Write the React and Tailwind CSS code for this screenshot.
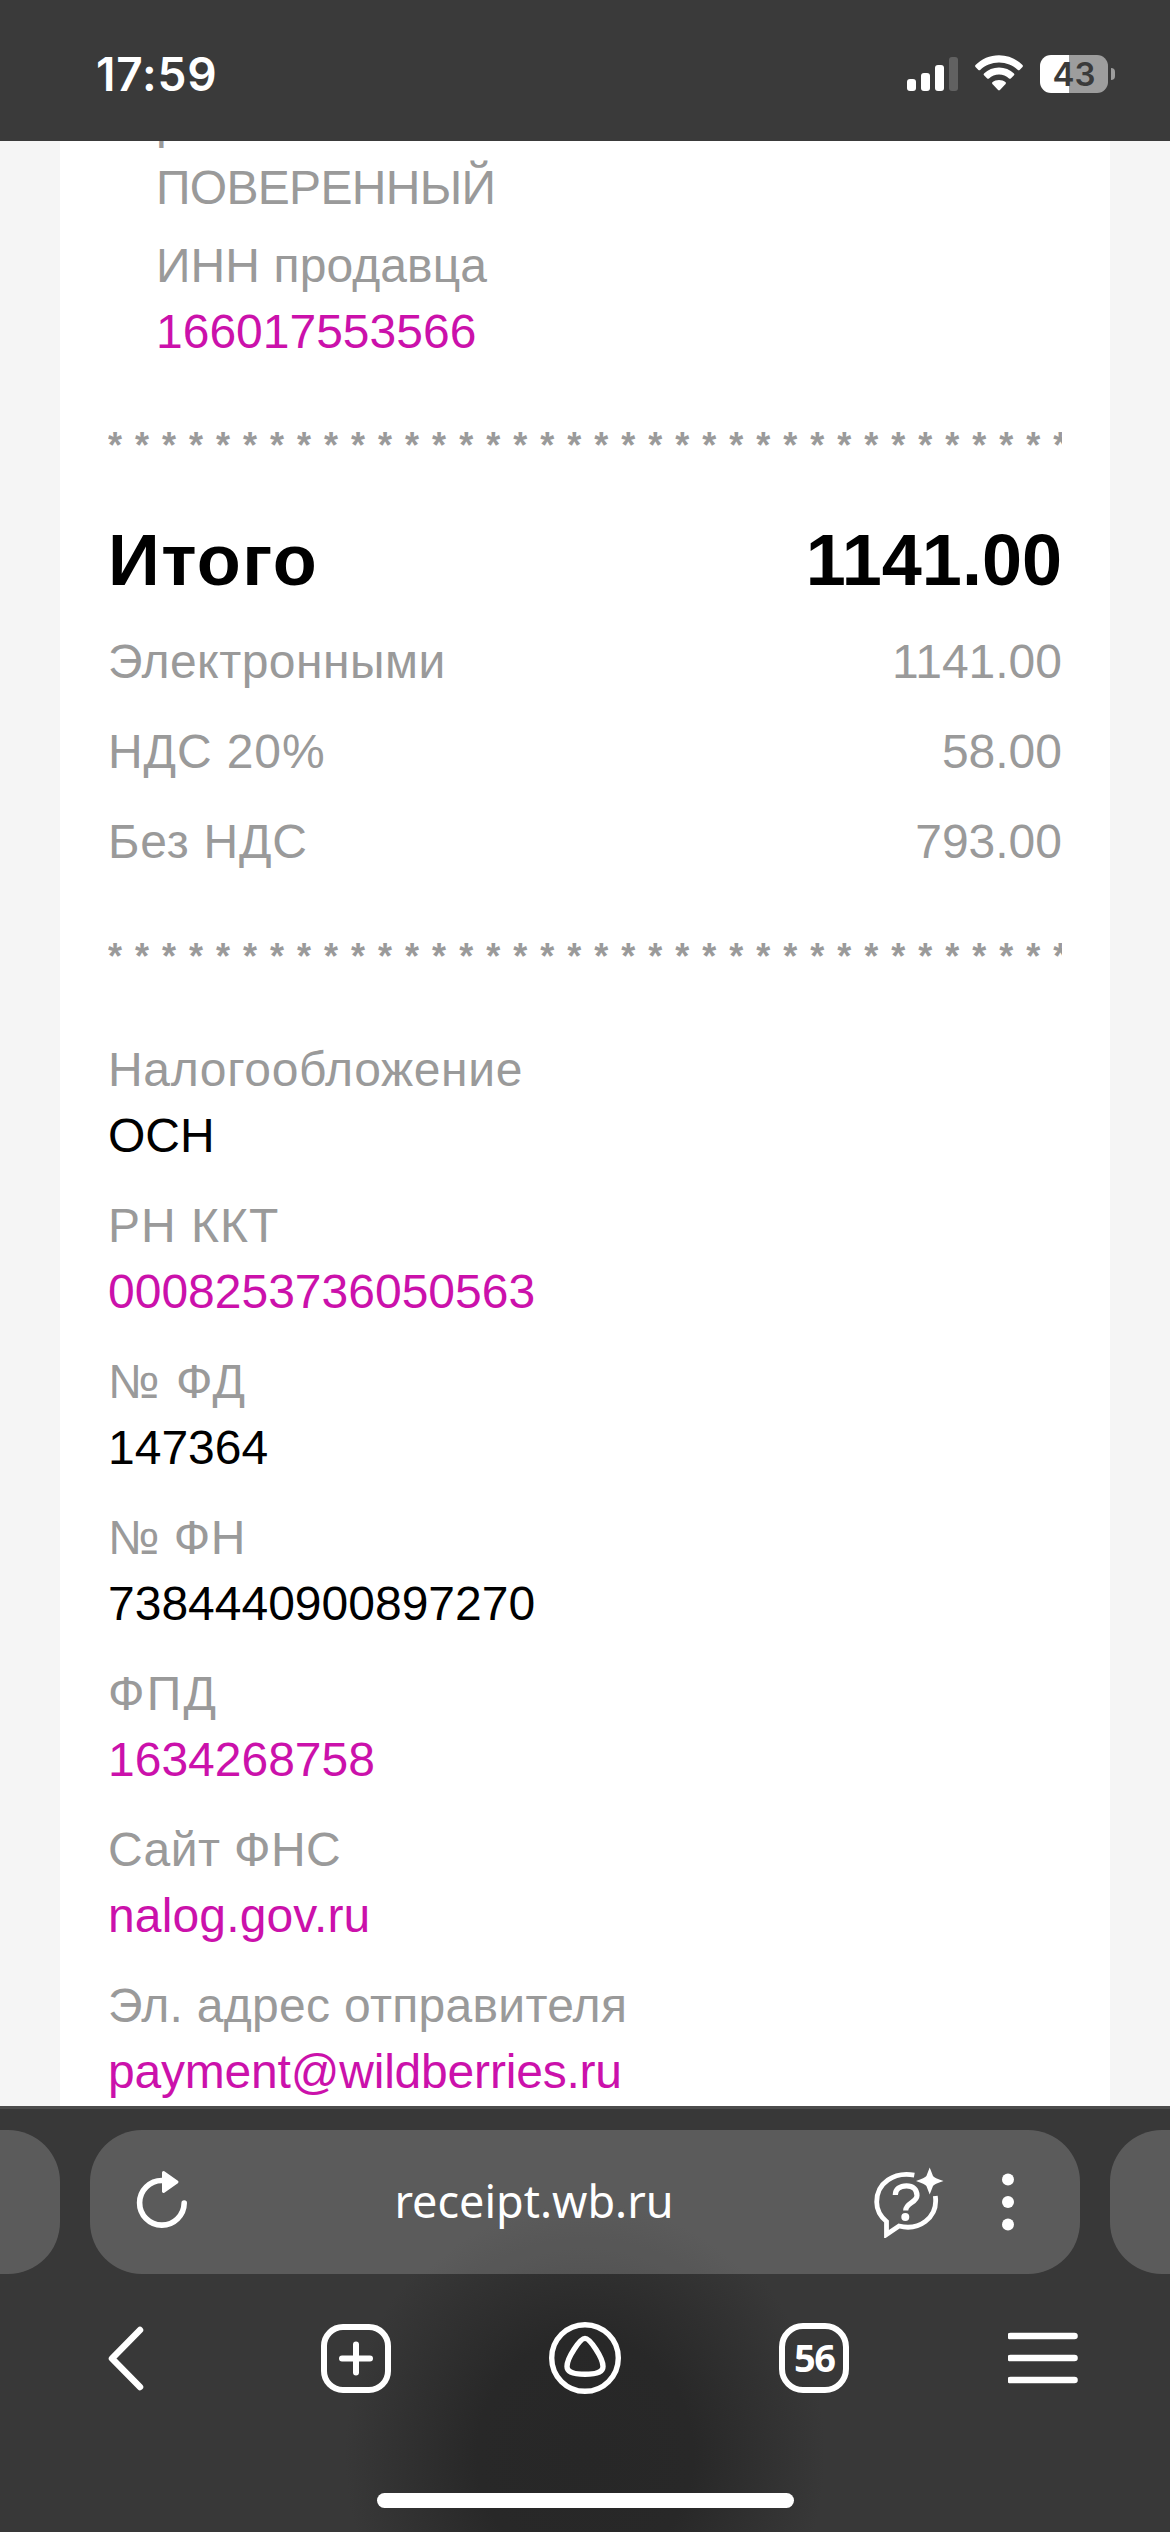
import React from 'react';

const details = [
  { label: 'Налогообложение', value: 'ОСН', spacing: 'tracking-[0.65px]' },
  { label: 'РН ККТ', value: '0008253736050563', link: true, spacing: 'tracking-[1px]' },
  { label: '№ ФД', value: '147364', spacing: 'tracking-[1.6px]' },
  { label: '№ ФН', value: '7384440900897270', spacing: 'tracking-[0.5px]' },
  { label: 'ФПД', value: '1634268758', link: true, spacing: 'tracking-[2.2px]' },
  { label: 'Сайт ФНС', value: 'nalog.gov.ru', link: true, spacing: 'tracking-[0.4px]', valueSpacing: 'tracking-[0.15px]' },
  { label: 'Эл. адрес отправителя', value: 'payment@wildberries.ru', link: true, spacing: 'tracking-[0.3px]', valueSpacing: 'tracking-[-0.2px]' },
];

const totals = [
  { label: 'Электронными', value: '1141.00', spacing: 'tracking-[0.5px]' },
  { label: 'НДС 20%', value: '58.00', spacing: 'tracking-[0.9px]' },
  { label: 'Без НДС', value: '793.00', spacing: 'tracking-[0.75px]' },
];

const StatusBar = () => (
  <header className="flex h-[141px] shrink-0 items-start justify-between bg-[#3a3a3a] pl-[96px] pr-[55px] text-white">
    <span className="mt-[46px] font-['Inter',sans-serif] text-[46px] font-semibold leading-[56px] tracking-[0.8px]">17:59</span>
    <div className="mt-[55px] flex h-[38px]">
      <svg className="mt-[2px] h-[34px] w-[51px]" viewBox="0 0 51 34" fill="currentColor">
        <rect x="0" y="22" width="9" height="12" rx="3" />
        <rect x="14" y="16" width="9" height="18" rx="3" />
        <rect x="28" y="8" width="9" height="26" rx="3" />
        <rect x="42" y="0" width="9" height="34" rx="3" opacity="0.2" />
      </svg>
      <svg className="ml-[17px] h-[36px] w-[48px]" viewBox="0 0 48 36" fill="currentColor">
        <path d="M24 0.3C33.2 0.3 41.5 4 47.5 10.1Q48.3 11 47.5 11.9L44.6 14.9Q43.7 15.7 42.8 14.9C37.9 10.2 31.2 7.4 24 7.4S10.1 10.2 5.2 14.9Q4.3 15.7 3.4 14.9L0.5 11.9Q-0.3 11 0.5 10.1C6.5 4 14.8 0.3 24 0.3Z" />
        <path d="M24 12.6C29.8 12.6 35 14.8 39 18.4Q39.9 19.3 39 20.2L35.8 23.4Q34.9 24.2 34 23.4C31.3 21 27.8 19.6 24 19.6S16.7 21 14 23.4Q13.1 24.2 12.2 23.4L9 20.2Q8.1 19.3 9 18.4C13 14.8 18.2 12.6 24 12.6Z" />
        <path d="M24 25C26.5 25 28.8 25.9 30.6 27.3Q31.4 28 30.6 28.9L24.9 35.1Q24 36 23.1 35.1L17.4 28.9Q16.6 28 17.4 27.3C19.2 25.9 21.5 25 24 25Z" />
      </svg>
      <div className="ml-[17px] flex h-[38px] w-[68px] items-center justify-center rounded-[11px] bg-linear-to-r from-white from-[43%] to-[#9d9d9d] to-[43%] font-['Inter',sans-serif] text-[33px] font-semibold leading-[38px] text-[#3a3a3a]">
        43
      </div>
      <div className="ml-[3px] mt-[13px] h-[12px] w-[4px] rounded-r-full bg-[#9d9d9d]" />
    </div>
  </header>
);

const Stars = () => (
  <div className="h-[36px] overflow-hidden whitespace-nowrap text-[36px] font-bold leading-[36px] tracking-[13px] text-[#9a9a9a]">
    {'*'.repeat(36)}
  </div>
);

const Receipt = () => (
  <main className="flex h-[1965px] shrink-0 flex-col overflow-hidden bg-[#f5f5f5] px-[60px]">
    <div className="h-[1965px] bg-white px-[48px] font-['Liberation_Sans',Arial,sans-serif] text-[48px] leading-[66px] text-[#9a9a9a]">
      <div className="-mt-[52px] pl-[48px]">
        <p>р</p>
        <p className="tracking-[-0.7px]">ПОВЕРЕННЫЙ</p>
        <p className="mt-[12px] tracking-[0.1px]">ИНН продавца</p>
        <p className="text-[#cb11ab]">166017553566</p>
      </div>
      <div className="mt-[63px]">
        <Stars />
      </div>
      <div className="mt-[51px] flex h-[90px] items-center justify-between text-[72px] font-bold leading-[90px] text-black">
        <span className="tracking-[1.4px]">Итого</span>
        <span>1141.00</span>
      </div>
      <div className="mt-[12px]">
        {totals.map((row) => (
          <div key={row.label} className="flex h-[90px] items-center justify-between">
            <span className={row.spacing}>{row.label}</span>
            <span>{row.value}</span>
          </div>
        ))}
      </div>
      <div className="mt-[52px]">
        <Stars />
      </div>
      <dl className="mt-[62px]">
        {details.map((item) => (
          <div key={item.label} className="mb-[24px]">
            <dt className={item.spacing}>{item.label}</dt>
            <dd className={`${item.link ? 'text-[#cb11ab]' : 'text-black'} ${item.valueSpacing || ''}`}>{item.value}</dd>
          </div>
        ))}
      </dl>
    </div>
  </main>
);

const AddressBar = () => (
  <div className="flex h-[144px] justify-between">
    <div className="w-[60px] rounded-r-[52px] bg-white/18" />
    <div className="flex w-[990px] items-center rounded-[52px] bg-white/18 pl-[44px] pr-[65px] text-white">
      <svg className="h-[64px] w-[56px]" viewBox="0 0 56 64" fill="none" stroke="currentColor" strokeWidth="5.6" strokeLinecap="round">
        <path d="M28 10.5A22.3 22.3 0 1 0 50.2 33" />
        <path d="M29.5 2.5L43 12L29.5 21.5Z" fill="currentColor" strokeWidth="3" strokeLinejoin="round" />
      </svg>
      <span className="-mt-[3px] flex-1 pl-[6px] text-center font-['Noto_Sans',sans-serif] text-[45px]">receipt.wb.ru</span>
      <svg className="h-[72px] w-[72px]" viewBox="0 0 72 72" fill="none" stroke="currentColor" strokeWidth="4.8">
        <path d="M42.3 9.2C22 5.5 4.7 17 4.7 36C4.7 44 8.5 50.5 14.5 55.5V68.5L27 60C46 65 66.5 52.5 63.3 30" />
        <path d="M23.3 29C23.3 23 28 19.8 34.500 19.8S45 23.3 45 29.5C45 36.5 33.7 37 33.7 44.5" strokeWidth="5.2" />
        <circle cx="33.3" cy="51" r="4" fill="currentColor" stroke="none" />
        <path d="M57.7 1.5L61 10Q62 12 71.500 15Q62 18 61 20L57.700 28.5L54.400 20Q53 18 44 15Q53 12 54.400 10Z" fill="currentColor" stroke="none" />
      </svg>
      <svg className="ml-[57px] h-[60px] w-[14px]" viewBox="0 0 14 60" fill="currentColor">
        <circle cx="7" cy="7.5" r="6" />
        <circle cx="7" cy="30" r="6" />
        <circle cx="7" cy="52.5" r="6" />
      </svg>
    </div>
    <div className="w-[60px] rounded-l-[52px] bg-white/18" />
  </div>
);

const NavBar = () => (
  <nav className="mt-[48px] grid h-[72px] grid-cols-5 place-items-center px-[12px] text-white">
    <svg className="h-[72px] w-[40px]" viewBox="0 0 40 72" fill="none" stroke="currentColor" strokeWidth="6.5" strokeLinecap="round" strokeLinejoin="round">
      <path d="M33 8L5 36.5L33 65" />
    </svg>
    <svg className="h-[72px] w-[72px]" viewBox="0 0 72 72" fill="none" stroke="currentColor" strokeWidth="6" strokeLinecap="round">
      <rect x="4" y="5" width="64" height="63" rx="19" />
      <path d="M36 22.5V50.5M22 36.5H50" />
    </svg>
    <svg className="h-[72px] w-[72px]" viewBox="0 0 72 72" fill="none" stroke="currentColor" strokeWidth="5.4">
      <circle cx="36" cy="36" r="33.3" />
      <path d="M36 16.4C31 16.4 18 36 18 44.5C18 49.5 24 52.3 36 52.3S54 49.5 54 44.5C54 36 41 16.4 36 16.4Z" />
    </svg>
    <div className="flex h-[70px] w-[70px] items-center justify-center rounded-[24px] border-[6px] border-white font-['Noto_Sans',sans-serif] text-[38px] font-bold leading-[56px] tracking-[-1.5px]">
      <span className="-mt-[2px]">56</span>
    </div>
    <svg className="h-[72px] w-[71px]" viewBox="0 0 71 72" fill="none" stroke="currentColor" strokeWidth="6.6" strokeLinecap="round">
      <path d="M2.500 14H66.500M2.500 36H66.500M2.500 58H66.500" />
    </svg>
  </nav>
);

const App = () => (
  <div className="flex h-[2532px] w-[1170px] flex-col overflow-hidden bg-white">
    <StatusBar />
    <Receipt />
    <footer className="flex h-[426px] shrink-0 flex-col border-t-[3px] border-[#4c4c4c] bg-[#383838] bg-[radial-gradient(ellipse_240px_260px_at_585px_345px,#272727_0%,#282828_45%,#383838_100%)] pt-[21px]">
      <AddressBar />
      <NavBar />
      <div className="mx-auto mt-[99px] h-[15px] w-[417px] shrink-0 rounded-full bg-white" />
    </footer>
  </div>
);

export default App;
